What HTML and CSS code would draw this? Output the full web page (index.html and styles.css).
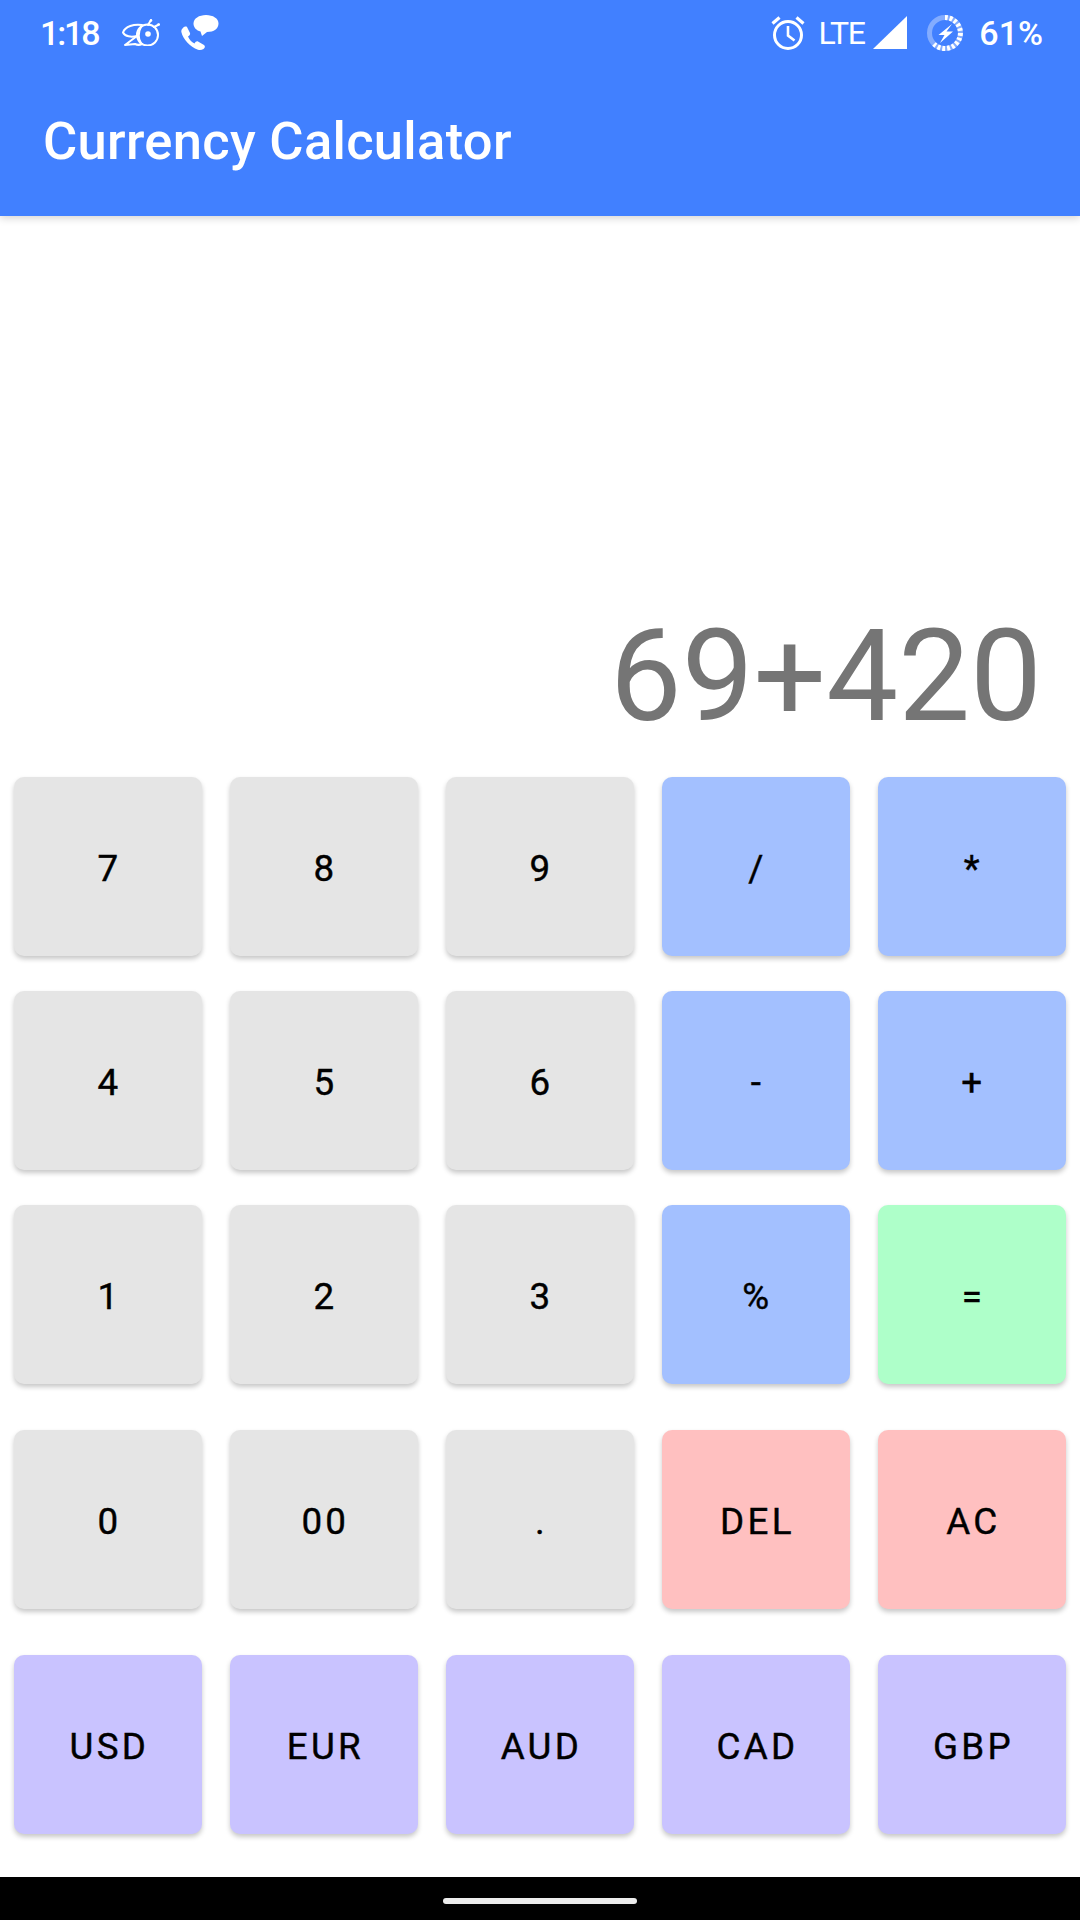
FILE: index.html
```html
<!DOCTYPE html>
<html lang="en">
<head>
    <meta charset="UTF-8">
    <meta name="viewport" content="width=device-width, initial-scale=1.0">
    <title>Currency Calculator</title>
    <link rel="stylesheet" href="styles.css">
</head>
<body>
    <header class="app-bar">
        <div class="status-bar">
            <div class="status-left">
                <span class="clock">1:18</span>
                <svg class="bee-icon" viewBox="0 0 38 27" fill="none" stroke="#fff" stroke-width="2" stroke-linecap="round" stroke-linejoin="round">
                    <path d="M20 6C12 5 3 7 1 13.500C3 17.500 9 18.500 15 17"/>
                    <path d="M15 17L3 26L13 25C15 26 18 26 20 25"/>
                    <circle cx="25.500" cy="16" r="10.500"/>
                    <path d="M19 8C16 13 16 20 19 24"/>
                    <circle cx="26" cy="15" r="2.800" fill="#fff" stroke="none"/>
                    <path d="M26 6L29 1M32 8L37 5.500"/>
                    <circle cx="29" cy="1.500" r="1.300" fill="#fff" stroke="none"/>
                    <circle cx="36.500" cy="5.500" r="1.300" fill="#fff" stroke="none"/>
                </svg>
                <svg class="call-icon" viewBox="0 0 38 36" fill="#fff">
                    <path d="M1.500 13.500C3 11.500 5 11 6 12L9 18C9.500 19.500 8.500 20.500 7 21.500C8.500 25 10.500 27 13.500 28.500C14.500 27 15.500 26 17 26.500L23 30C24.500 31 24 33 22.500 34C21 35 19 35.300 17 34.800C9 32 2 24 .5 17.500C0 16 .5 14.500 1.500 13.500Z"/>
                    <path d="M25 0C18 0 12.500 3.500 12.500 8.500C12.500 12.500 15.500 15.500 19.500 16.500L21 21L26 17C33 17 37.500 13.500 37.500 8.500C37.500 3.500 32 0 25 0Z"/>
                </svg>
            </div>
            <div class="status-right">
                <svg class="alarm-icon" viewBox="0 0 34 36" fill="none" stroke="#fff" stroke-width="3">
                    <circle cx="17" cy="20" r="13.500"/>
                    <path d="M17 11V20.500L23.500 25.500" stroke-width="2.600"/>
                    <path d="M1.500 8.500L8.500 2.500M32.500 8.500L25.500 2.500" stroke-width="3.200"/>
                </svg>
                <span class="lte">LTE</span>
                <svg class="signal-icon" viewBox="0 0 34 33" fill="#fff"><path d="M34 0V33H0Z"/></svg>
                <svg class="charge-icon" viewBox="0 0 36 36" fill="none">
                    <circle cx="18" cy="18" r="15.500" stroke="#fff" stroke-opacity=".35" stroke-width="5"/>
                    <path class="charge-level" d="M18 2.500A15.500 15.500 0 1 1 7 29" stroke="#fff" stroke-width="5"/>
                    <path d="M25 9L11.500 20H17.500L13 28L26 16.500H19.500Z" fill="#fff"/>
                </svg>
                <span class="battery">61%</span>
            </div>
        </div>
        <div class="toolbar">
            <h1 class="app-title">Currency Calculator</h1>
        </div>
    </header>

    <main class="display">
        <div class="expression">69+420</div>
    </main>

    <section class="keypad">
        <div class="key-row">
            <button class="key">7</button>
            <button class="key">8</button>
            <button class="key">9</button>
            <button class="key key-op">/</button>
            <button class="key key-op">*</button>
        </div>
        <div class="key-row">
            <button class="key">4</button>
            <button class="key">5</button>
            <button class="key">6</button>
            <button class="key key-op">-</button>
            <button class="key key-op">+</button>
        </div>
        <div class="key-row">
            <button class="key">1</button>
            <button class="key">2</button>
            <button class="key">3</button>
            <button class="key key-op">%</button>
            <button class="key key-equals">=</button>
        </div>
        <div class="key-row key-row-wide">
            <button class="key">0</button>
            <button class="key">00</button>
            <button class="key">.</button>
            <button class="key key-clear">DEL</button>
            <button class="key key-clear">AC</button>
        </div>
        <div class="key-row key-row-wide">
            <button class="key key-currency">USD</button>
            <button class="key key-currency">EUR</button>
            <button class="key key-currency">AUD</button>
            <button class="key key-currency">CAD</button>
            <button class="key key-currency">GBP</button>
        </div>
    </section>

    <footer class="nav-bar">
        <div class="nav-handle"></div>
    </footer>
</body>
</html>
```

FILE: styles.css
```css
* {
    box-sizing: border-box;
}
body {
    margin: 0;
    height: 1920px;
    display: flex;
    flex-direction: column;
    font-family: Roboto, "Liberation Sans", sans-serif;
    background-color: #fff;
    overflow: hidden;
}
.app-bar {
    height: 216px;
    flex: none;
    background-color: #4180ff;
    color: #fff;
    box-shadow: 0 2px 8px rgba(0, 0, 0, 0.18);
    position: relative;
}
.status-bar {
    height: 63px;
    padding: 2px 37px 0 40px;
    display: flex;
    justify-content: space-between;
    align-items: center;
}
.status-left,
.status-right {
    display: flex;
    align-items: center;
}
.clock {
    font-size: 34px;
    font-weight: 500;
    letter-spacing: -2.1px;
}
.bee-icon {
    width: 38px;
    height: 27px;
    margin-left: 23px;
}
.call-icon {
    width: 38px;
    height: 36px;
    margin-left: 21px;
}
.alarm-icon {
    width: 34px;
    height: 36px;
}
.lte {
    font-size: 32px;
    margin-left: 14px;
    letter-spacing: -1.5px;
}
.signal-icon {
    width: 34px;
    height: 33px;
    margin-left: 9px;
}
.charge-icon {
    width: 36px;
    height: 36px;
    margin-left: 20px;
}
.charge-level {
    stroke-dasharray: 2.800 2;
}
.battery {
    font-size: 34px;
    font-weight: 500;
    margin-left: 16px;
}
.toolbar {
    height: 153px;
    padding: 2px 43px 0;
    display: flex;
    align-items: center;
}
.app-title {
    margin: 0;
    font-size: 52.5px;
    font-weight: 500;
    letter-spacing: 0.3px;
}
.display {
    flex: 1;
    display: flex;
    justify-content: flex-end;
    align-items: flex-end;
    padding: 0 38px 37px 0;
}
.expression {
    font-size: 128px;
    line-height: 1;
    color: #757575;
}
.keypad {
    flex: none;
    display: flex;
    flex-direction: column;
    row-gap: 35px;
    padding: 0 14px 43px 13.500px;
}
.key-row {
    display: grid;
    grid-template-columns: repeat(5, 1fr);
    column-gap: 27.500px;
}
.key-row-wide {
    margin-top: 11px;
}
.key {
    height: 179px;
    border: none;
    border-radius: 10px;
    padding: 4px 0 0 3.280px;
    font-family: inherit;
    font-size: 36.750px;
    font-weight: 400;
    -webkit-text-stroke: 0.4px #000;
    letter-spacing: 3.280px;
    color: #000;
    background-color: #e5e5e5;
    box-shadow: 0 3px 5px rgba(0, 0, 0, 0.22);
}
.key-op {
    background-color: #a3c0ff;
}
.key-equals {
    background-color: #aeffc9;
}
.key-clear {
    background-color: #ffc0c0;
}
.key-currency {
    background-color: #c9c3ff;
}
.nav-bar {
    height: 43px;
    flex: none;
    padding-top: 5px;
    background-color: #000;
    display: flex;
    justify-content: center;
    align-items: center;
}
.nav-handle {
    width: 194px;
    height: 6px;
    border-radius: 3px;
    background-color: #ececec;
}
```
